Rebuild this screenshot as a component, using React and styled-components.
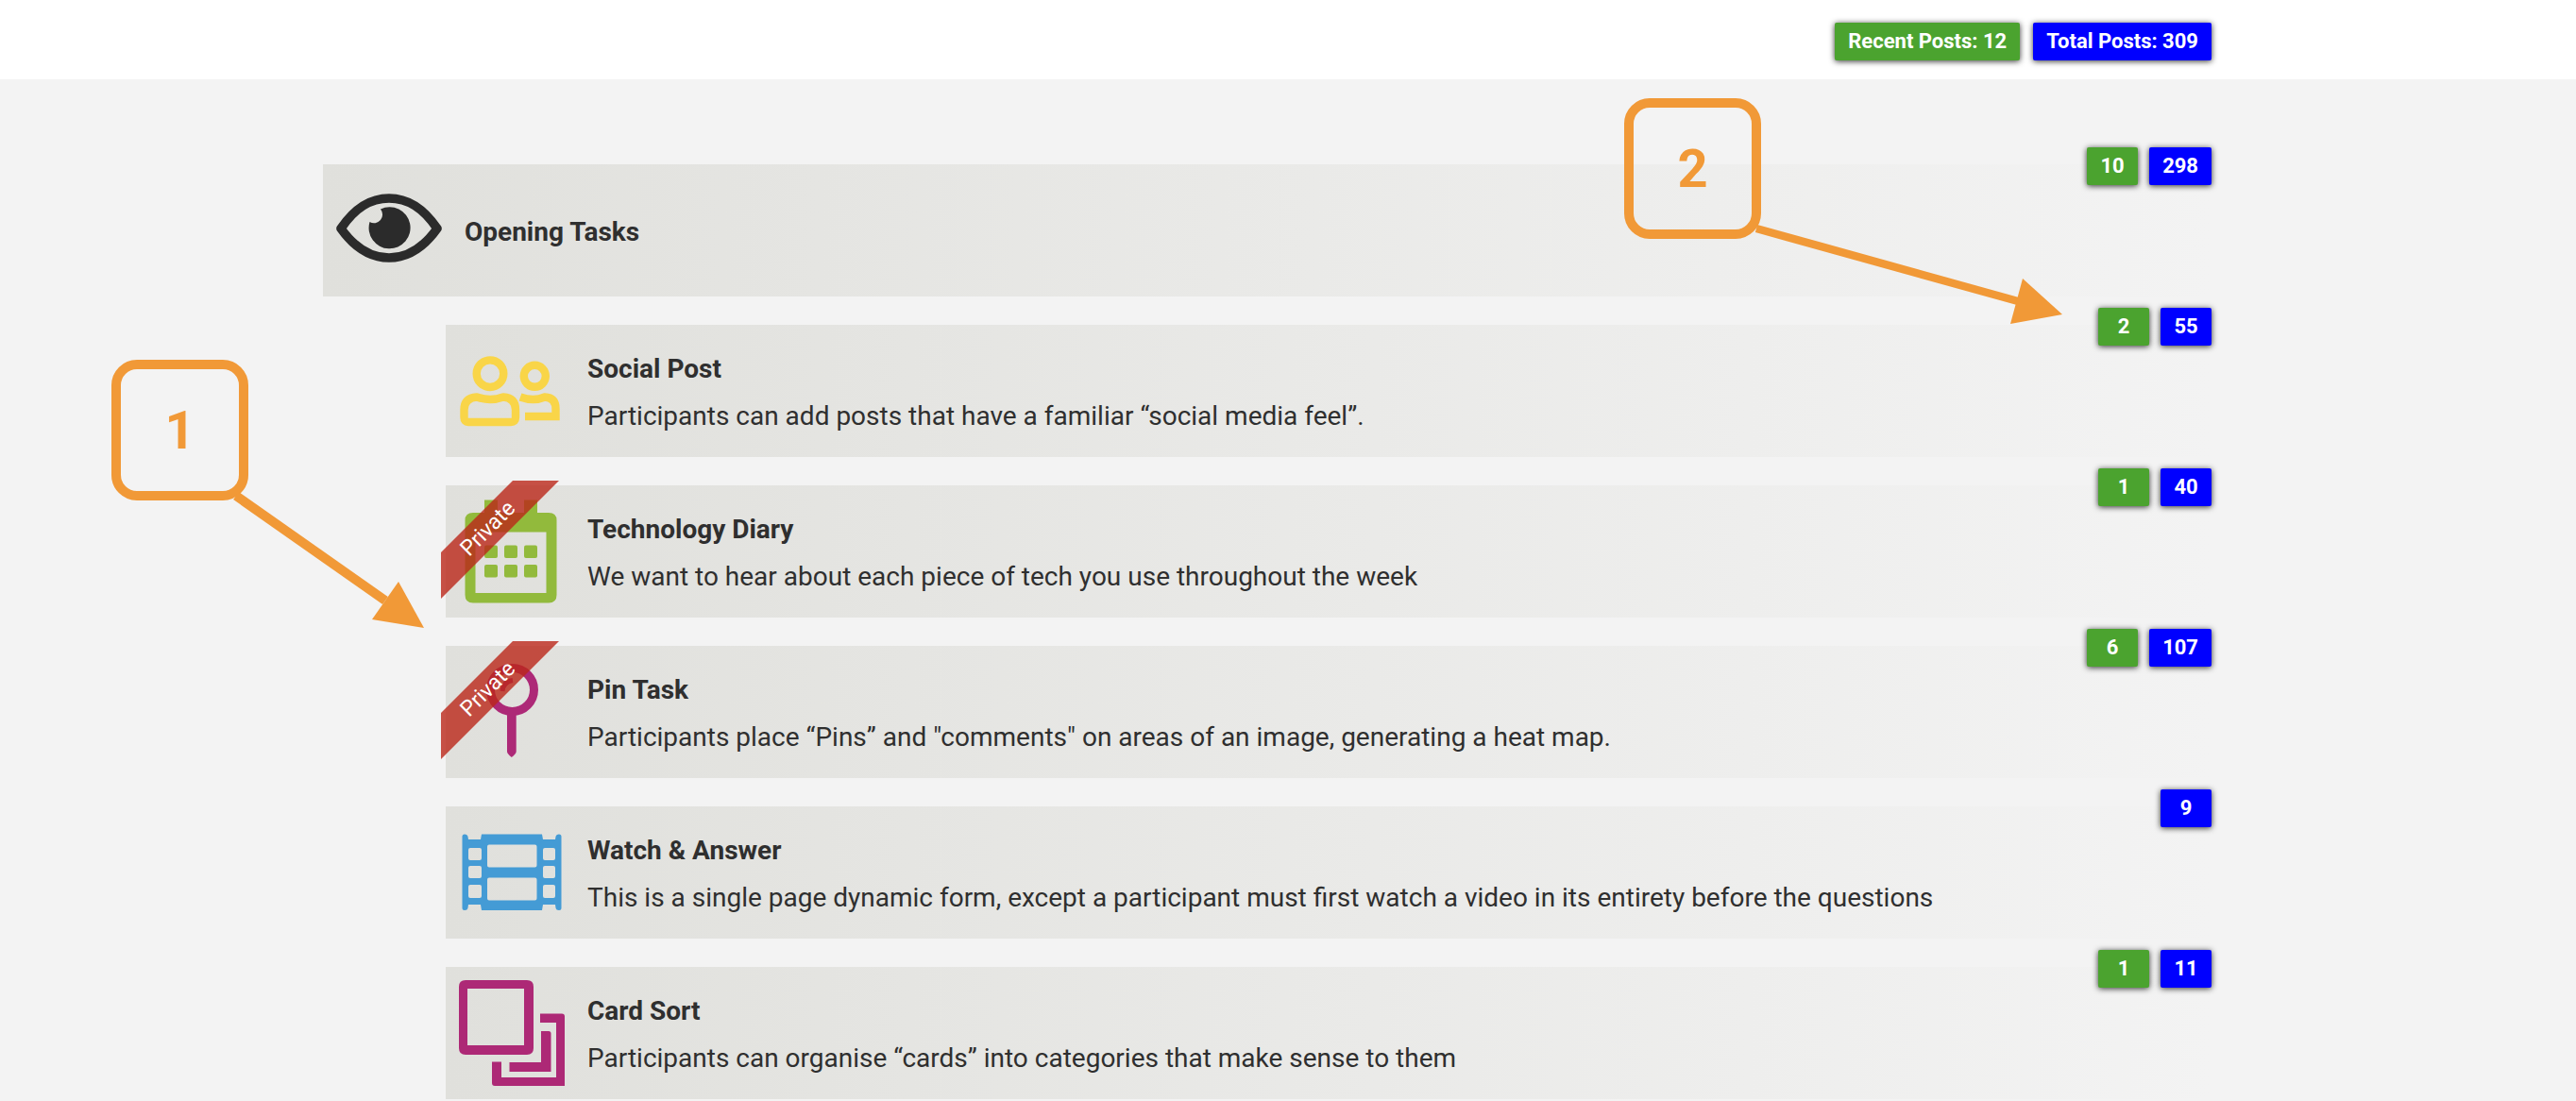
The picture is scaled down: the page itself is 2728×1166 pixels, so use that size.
import React from "react";
import styled, { createGlobalStyle } from "styled-components";

const Global = createGlobalStyle`
html, body {
    margin: 0;
    height: 100%;
    overflow: hidden;
    background: #f3f3f3;
    font-family: Roboto, "Liberation Sans", sans-serif;
}
`

const Page = styled.div`
position: relative;
height: 1166px;
overflow: hidden;
`

const Header = styled.header`
display: flex;
justify-content: flex-end;
gap: 14px;
box-sizing: border-box;
height: 84px;
padding: 24px 386px 0 0;
background: #fff;
`

const Badge = styled.span`
box-sizing: border-box;
height: 40px;
min-width: 54px;
padding: 0 14px;
border-radius: 2px;
background: ${({ $tone }) => ($tone === "green" ? "#4ba32f" : "#0000ff")};
box-shadow: 0 1px 6px rgba(0, 0, 0, 0.8);
color: #fff;
font-size: 22px;
font-weight: 700;
line-height: 40px;
text-align: center;
`

const List = styled.main`
display: flex;
flex-direction: column;
gap: 30px;
width: 2000px;
padding: 90px 0 0 342px;
`

const Row = styled.section`
position: relative;
display: flex;
gap: 24px;
box-sizing: border-box;
height: 140px;
margin-left: ${({ $indent }) => ($indent ? "130px" : "0")};
padding: 14px;
background: linear-gradient(to right, #e0e0dc, #f3f3f3);
`

const IconBox = styled.svg`
display: block;
flex: none;
width: 112px;
height: 112px;
`

const TextCol = styled.div`
display: flex;
flex-direction: column;
justify-content: center;
padding-top: 3px;
color: #2f2f2f;
font-size: 28px;
line-height: 50px;
`

const RowTitle = styled.div`
font-weight: 700;
`

const Counts = styled.div`
position: absolute;
top: -18px;
right: 0;
display: flex;
gap: 12px;
`

const Ribbon = styled.div`
position: absolute;
top: -5px;
left: -5px;
display: flex;
align-items: center;
justify-content: center;
width: 100px;
height: 100px;
color: #fff;
font-size: 23px;
&::before {
    content: "";
    position: absolute;
    top: 0;
    left: 0;
    width: 125px;
    height: 125px;
    background: rgba(186, 39, 25, 0.8);
    clip-path: polygon(76px 0, 125px 0, 3px 122px, 0 125px, 0 76px);
}
span {
    position: relative;
    transform: rotate(-45deg);
}
`

const Callout = styled.div`
position: absolute;
top: ${({ $top }) => $top}px;
left: ${({ $left }) => $left}px;
display: flex;
align-items: center;
justify-content: center;
box-sizing: border-box;
width: 145px;
height: 149px;
border: 10px solid #f19937;
border-radius: 27px;
color: #f19937;
font-family: Roboto, "Liberation Sans", sans-serif;
font-size: 56px;
font-weight: 700;
`

const ArrowLayer = styled.svg`
position: absolute;
top: 0;
left: 0;
width: 2728px;
height: 1166px;
pointer-events: none;
`

const EyeIcon = () => (
    <IconBox viewBox="0 0 112 112">
        <path d="M5 54 C20 32 36 22 56 22 C76 22 92 32 107 54 C92 75 76 85 56 85 C36 85 20 75 5 54 Z" fill="none" stroke="#2b2b2b" strokeWidth="9.5" strokeLinejoin="round" />
        <path d="M47 33.5 A22 22 0 1 1 35.5 47 A9 9 0 0 0 47 33.5 Z" fill="#2b2b2b" />
    </IconBox>
);

const PeopleIcon = () => (
    <IconBox viewBox="0 0 112 112" fill="none" stroke="#f9d548" strokeWidth="8.4">
        <circle cx="33" cy="37.7" r="14.3" />
        <circle cx="80.3" cy="40.3" r="11.5" />
        <path d="M10 89 H55 Q60 89 60 84 V76 Q60 63.5 47 62.5 Q33 67.5 19 62.5 Q5.5 63.5 5.5 76 V84 Q5.5 89 10 89 Z" strokeLinejoin="round" />
        <path d="M65 62.5 Q79 67.5 91 62.5 Q102.5 63 102.5 75 V83 H70" />
    </IconBox>
);

const CalendarIcon = () => (
    <IconBox viewBox="0 0 112 112" fill="#92ba3c">
        <path fillRule="evenodd" d="M15 15 H27 V1.5 H41 V15 H69 V1.5 H83 V15 H95 Q103.5 15 103.5 23 V102 Q103.5 110.5 95 110.5 H15 Q6.5 110.5 6.5 102 V23 Q6.5 15 15 15 Z M17.5 35.5 V100 H92.5 V35.5 Z" />
        {[27, 48, 69].map((x) => [49.5, 70].map((y) => (
            <rect key={`${x}-${y}`} x={x} y={y} width="14" height="13.5" rx="2" />
        )))}
    </IconBox>
);

const PinIcon = () => (
    <IconBox viewBox="0 0 112 112">
        <circle cx="56.5" cy="32.5" r="23" fill="none" stroke="#ad2977" strokeWidth="9" />
        <path d="M46 34 Q47 24 57 22.5" fill="none" stroke="#ad2977" strokeWidth="5" />
        <path d="M51 58 H60.7 V98 Q60.7 100 55.8 104 Q51 100 51 98 Z" fill="#ad2977" />
    </IconBox>
);

const FilmIcon = () => (
    <IconBox viewBox="0 0 112 112" fill="#449bd5">
        <path fillRule="evenodd" d="M3.5 18 Q3.5 15.5 6 15.5 Q9 15.5 9.5 18 L10 21 H23 L24 15.5 H88 L89 21 H102 L102.5 18 Q103 15.5 106 15.5 Q108.5 15.5 108.5 18 V93.5 Q108.5 96 106 96 Q103 96 102.5 93.5 L102 90 H89 L88 96 H24 L23 90 H10 L9.5 93.5 Q9 96 6 96 Q3.5 96 3.5 93.5 Z
            M10 32 V41 Q10 43 12 43 H22 Q24 43 24 41 V32 Q24 30 22 30 H12 Q10 30 10 32 Z
            M10 51 V60 Q10 62 12 62 H22 Q24 62 24 60 V51 Q24 49 22 49 H12 Q10 49 10 51 Z
            M10 71 V81 Q10 83 12 83 H22 Q24 83 24 81 V71 Q24 69 22 69 H12 Q10 69 10 71 Z
            M89 32 V41 Q89 43 91 43 H100 Q102 43 102 41 V32 Q102 30 100 30 H91 Q89 30 89 32 Z
            M89 51 V60 Q89 62 91 62 H100 Q102 62 102 60 V51 Q102 49 100 49 H91 Q89 49 89 51 Z
            M89 71 V81 Q89 83 91 83 H100 Q102 83 102 81 V71 Q102 69 100 69 H91 Q89 69 89 71 Z
            M30 28.5 V48.5 Q30 50.5 32 50.5 H80.5 Q82.5 50.5 82.5 48.5 V28.5 Q82.5 26.5 80.5 26.5 H32 Q30 26.5 30 28.5 Z
            M30 63.5 V83.5 Q30 85.5 32 85.5 H80.5 Q82.5 85.5 82.5 83.5 V63.5 Q82.5 61.5 80.5 61.5 H32 Q30 61.5 30 63.5 Z" />
    </IconBox>
);

const CardsIcon = () => (
    <IconBox viewBox="0 0 112 112" fill="#ad2976">
        <path fillRule="evenodd" d="M7 0 H72 Q79 0 79 7 V72 Q79 79 72 79 H7 Q0 79 0 72 V7 Q0 0 7 0 Z M9 9 V69 H69 V9 Z" />
        <path d="M87 54 H95 Q97.5 54 97.5 56.5 V97 H53.5 V87 H87 Z" />
        <path d="M86 35.5 H109 Q112 35.5 112 38.5 V112 H38 Q35 112 35 109 V86.5 H45 V103 H103 V45 H86 Z" />
    </IconBox>
);

const rows = [
    { icon: <EyeIcon />, title: "Opening Tasks", recent: 10, total: 298 },
    { icon: <PeopleIcon />, title: "Social Post", text: "Participants can add posts that have a familiar “social media feel”.", recent: 2, total: 55, indent: true },
    { icon: <CalendarIcon />, title: "Technology Diary", text: "We want to hear about each piece of tech you use throughout the week", recent: 1, total: 40, indent: true, locked: true },
    { icon: <PinIcon />, title: "Pin Task", text: "Participants place “Pins” and \"comments\" on areas of an image, generating a heat map.", recent: 6, total: 107, indent: true, locked: true },
    { icon: <FilmIcon />, title: "Watch & Answer", text: "This is a single page dynamic form, except a participant must first watch a video in its entirety before the questions", total: 9, indent: true },
    { icon: <CardsIcon />, title: "Card Sort", text: "Participants can organise “cards” into categories that make sense to them", recent: 1, total: 11, indent: true },
];

const App = () => {
    return <Page>
        <Global />
        <Header>
            <Badge $tone="green">Recent Posts: 12</Badge>
            <Badge $tone="blue">Total Posts: 309</Badge>
        </Header>
        <List>
            {rows.map(({ icon, title, text, recent, total, indent, locked }) => (
                <Row key={title} $indent={indent}>
                    {icon}
                    <TextCol>
                        <RowTitle>{title}</RowTitle>
                        {text && <div>{text}</div>}
                    </TextCol>
                    {locked && <Ribbon><span>Private</span></Ribbon>}
                    <Counts>
                        {recent && <Badge $tone="green">{recent}</Badge>}
                        <Badge $tone="blue">{total}</Badge>
                    </Counts>
                </Row>
            ))}
        </List>
        <Callout $top={381} $left={118}>1</Callout>
        <Callout $top={104} $left={1720}>2</Callout>
        <ArrowLayer viewBox="0 0 2728 1166">
            <path d="M250 525 L408 636" stroke="#f19937" strokeWidth="10" />
            <path d="M422 616 L394 656 L449 665 Z" fill="#f19937" />
            <path d="M1860 242 L2137 319" stroke="#f19937" strokeWidth="8.5" />
            <path d="M2142 295 L2129 343 L2184 333 Z" fill="#f19937" />
        </ArrowLayer>
    </Page>
}

export default App;
